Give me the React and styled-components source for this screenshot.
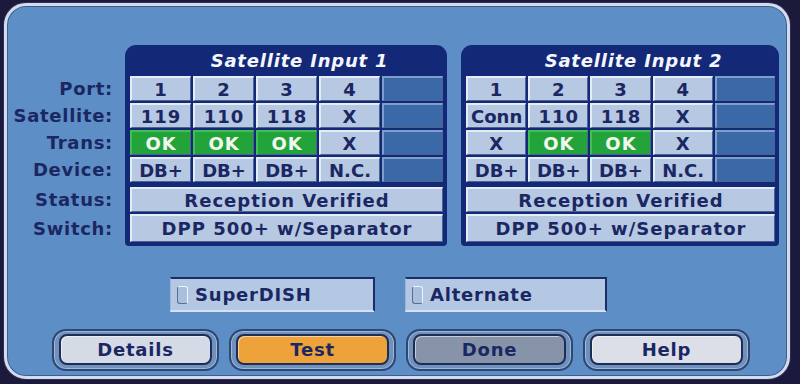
import React from 'react';
import styled, { createGlobalStyle } from 'styled-components';

const GlobalStyle = createGlobalStyle`
  html, body {
    margin: 0;
    padding: 0;
    background: #1b1a3c;
  }
  body {
    font-family: "DejaVu Sans", Verdana, sans-serif;
  }
`;

const ROWS = '25px 25px 25px 25px 28px 28px';

const Screen = styled.div`
  width: 800px;
  height: 384px;
  box-sizing: border-box;
  padding: 3px 10px 5px 4px;
  display: flex;
  background: #1b1a3c;
`;

const Panel = styled.div`
  flex: 1;
  display: flex;
  flex-direction: column;
  border: 3px solid #d3dcea;
  border-radius: 22px;
  background: #5d8ec5;
  box-shadow: inset 0 0 0 1px #3c5d8e, 0 0 0 1px #2c2d5a;
  padding-top: 39px;
`;

const Top = styled.div`
  display: flex;
  align-items: flex-start;
`;

const Labels = styled.div`
  width: 118px;
  box-sizing: border-box;
  padding: 31px 12px 0 0;
  display: grid;
  grid-template-rows: ${ROWS};
  row-gap: 2px;
`;

const Label = styled.div`
  display: flex;
  align-items: center;
  justify-content: flex-end;
  font-size: 18px;
  font-weight: bold;
  letter-spacing: 0.7px;
  color: #1b2762;
  margin-top: ${p => (p.$gap ? '3px' : '0')};
`;

const Table = styled.div`
  width: ${p => p.$w}px;
  margin-left: ${p => p.$ml}px;
  box-sizing: border-box;
  background: #142878;
  border-radius: 11px 11px 4px 4px;
  padding: 0 4px 4px 5px;
`;

const Title = styled.div`
  height: 31px;
  display: flex;
  align-items: center;
  justify-content: center;
  padding-left: 26px;
  color: #f4f6fb;
  font-size: 18px;
  font-weight: bold;
  font-style: italic;
  letter-spacing: 0.8px;
`;

const Grid = styled.div`
  display: grid;
  grid-template-columns: repeat(5, 1fr);
  grid-template-rows: ${ROWS};
  gap: 2px;
`;

const Cell = styled.div`
  display: flex;
  align-items: center;
  justify-content: center;
  box-sizing: border-box;
  font-size: 18px;
  font-weight: bold;
  letter-spacing: 1px;
  white-space: nowrap;
  overflow: hidden;
  color: ${p => (p.$ok ? '#f2f8f0' : '#1b2762')};
  background: ${p => (p.$ok ? '#22a43a' : p.$blank ? '#3b69a8' : '#b6c8e2')};
  border-top: 2px solid ${p => (p.$ok ? '#3fbf55' : p.$blank ? '#7d9fca' : '#e4ecf6')};
  border-left: 2px solid ${p => (p.$ok ? '#3fbf55' : p.$blank ? '#7d9fca' : '#e4ecf6')};
  border-bottom: 1px solid #4c6390;
  border-right: 1px solid #4c6390;
  grid-column: ${p => (p.$wide ? '1 / span 5' : 'auto')};
  margin-top: ${p => (p.$gap ? '3px' : '0')};
`;

const Options = styled.div`
  display: flex;
  gap: 30px;
  margin: 31px 0 0 163px;
`;

const Option = styled.div`
  width: ${p => p.$w}px;
  height: 35px;
  box-sizing: border-box;
  display: flex;
  align-items: center;
  gap: 7px;
  padding-left: 6px;
  background: #b4c8e3;
  border-top: 2px solid #1c2c66;
  border-right: 2px solid #1c2c66;
  border-left: 1px solid #9db6d8;
  border-bottom: 2px solid #d6e2f1;
  font-size: 18px;
  font-weight: bold;
  letter-spacing: 0.8px;
  color: #1b2762;
`;

const Box = styled.span`
  width: 9px;
  height: 16px;
  border: 1.5px solid #eef3fa;
  border-left-color: #5a6f92;
  border-bottom-color: #5a6f92;
  border-radius: 3px;
  background: #a9bfdc;
`;

const Buttons = styled.div`
  display: flex;
  gap: 10px;
  margin: 17px 0 0 45px;
`;

const Rim = styled.div`
  width: 167px;
  height: 42px;
  box-sizing: border-box;
  padding: 3px 5px 4px 5px;
  border: 2px solid #2e4775;
  border-radius: 14px;
  background: #6f91bc;
  box-shadow: inset 0 0 0 1px #9fb8d8;
`;

const Face = styled.div`
  height: 100%;
  box-sizing: border-box;
  display: flex;
  align-items: center;
  justify-content: center;
  border: 2px solid #1e2d58;
  border-radius: 8px;
  background: ${p => p.$bg};
  box-shadow: inset 1px 1px 0 #ffffff88;
  font-size: 18px;
  font-weight: bold;
  letter-spacing: 0.8px;
  color: #1b2762;
`;

const inputs = [
  {
    title: 'Satellite Input 1',
    w: 322,
    ml: 0,
    sat: ['119', '110', '118', 'X'],
    trans: ['OK', 'OK', 'OK', 'X']
  },
  {
    title: 'Satellite Input 2',
    w: 318,
    ml: 14,
    sat: ['Conn', '110', '118', 'X'],
    trans: ['X', 'OK', 'OK', 'X']
  }
];

const SatTable = ({ input }) => (
  <Table $w={input.w} $ml={input.ml}>
    <Title>{input.title}</Title>
    <Grid>
      {['1', '2', '3', '4'].map(v => <Cell key={'p' + v}>{v}</Cell>)}
      <Cell $blank />
      {input.sat.map((v, i) => (
        <Cell key={'s' + i} style={v === 'Conn' ? { letterSpacing: 0 } : undefined}>{v}</Cell>
      ))}
      <Cell $blank />
      {input.trans.map((v, i) => <Cell key={'t' + i} $ok={v === 'OK'}>{v}</Cell>)}
      <Cell $blank />
      {['DB+', 'DB+', 'DB+', 'N.C.'].map((v, i) => (
        <Cell key={'d' + i} style={{ letterSpacing: 0 }}>{v}</Cell>
      ))}
      <Cell $blank />
      <Cell $wide $gap>Reception Verified</Cell>
      <Cell $wide>DPP 500+ w/Separator</Cell>
    </Grid>
  </Table>
);

const buttons = [
  { label: 'Details', bg: '#d5dbe6' },
  { label: 'Test', bg: '#eda23a' },
  { label: 'Done', bg: '#8793a8' },
  { label: 'Help', bg: '#dcdfe7' }
];

export default function App() {
  return (
    <>
      <GlobalStyle />
      <Screen>
        <Panel>
          <Top>
            <Labels>
              <Label>Port:</Label>
              <Label>Satellite:</Label>
              <Label>Trans:</Label>
              <Label>Device:</Label>
              <Label $gap>Status:</Label>
              <Label>Switch:</Label>
            </Labels>
            {inputs.map(input => <SatTable key={input.title} input={input} />)}
          </Top>
          <Options>
            <Option $w={205}><Box />SuperDISH</Option>
            <Option $w={202}><Box />Alternate</Option>
          </Options>
          <Buttons>
            {buttons.map(b => (
              <Rim key={b.label}>
                <Face $bg={b.bg}>{b.label}</Face>
              </Rim>
            ))}
          </Buttons>
        </Panel>
      </Screen>
    </>
  );
}
